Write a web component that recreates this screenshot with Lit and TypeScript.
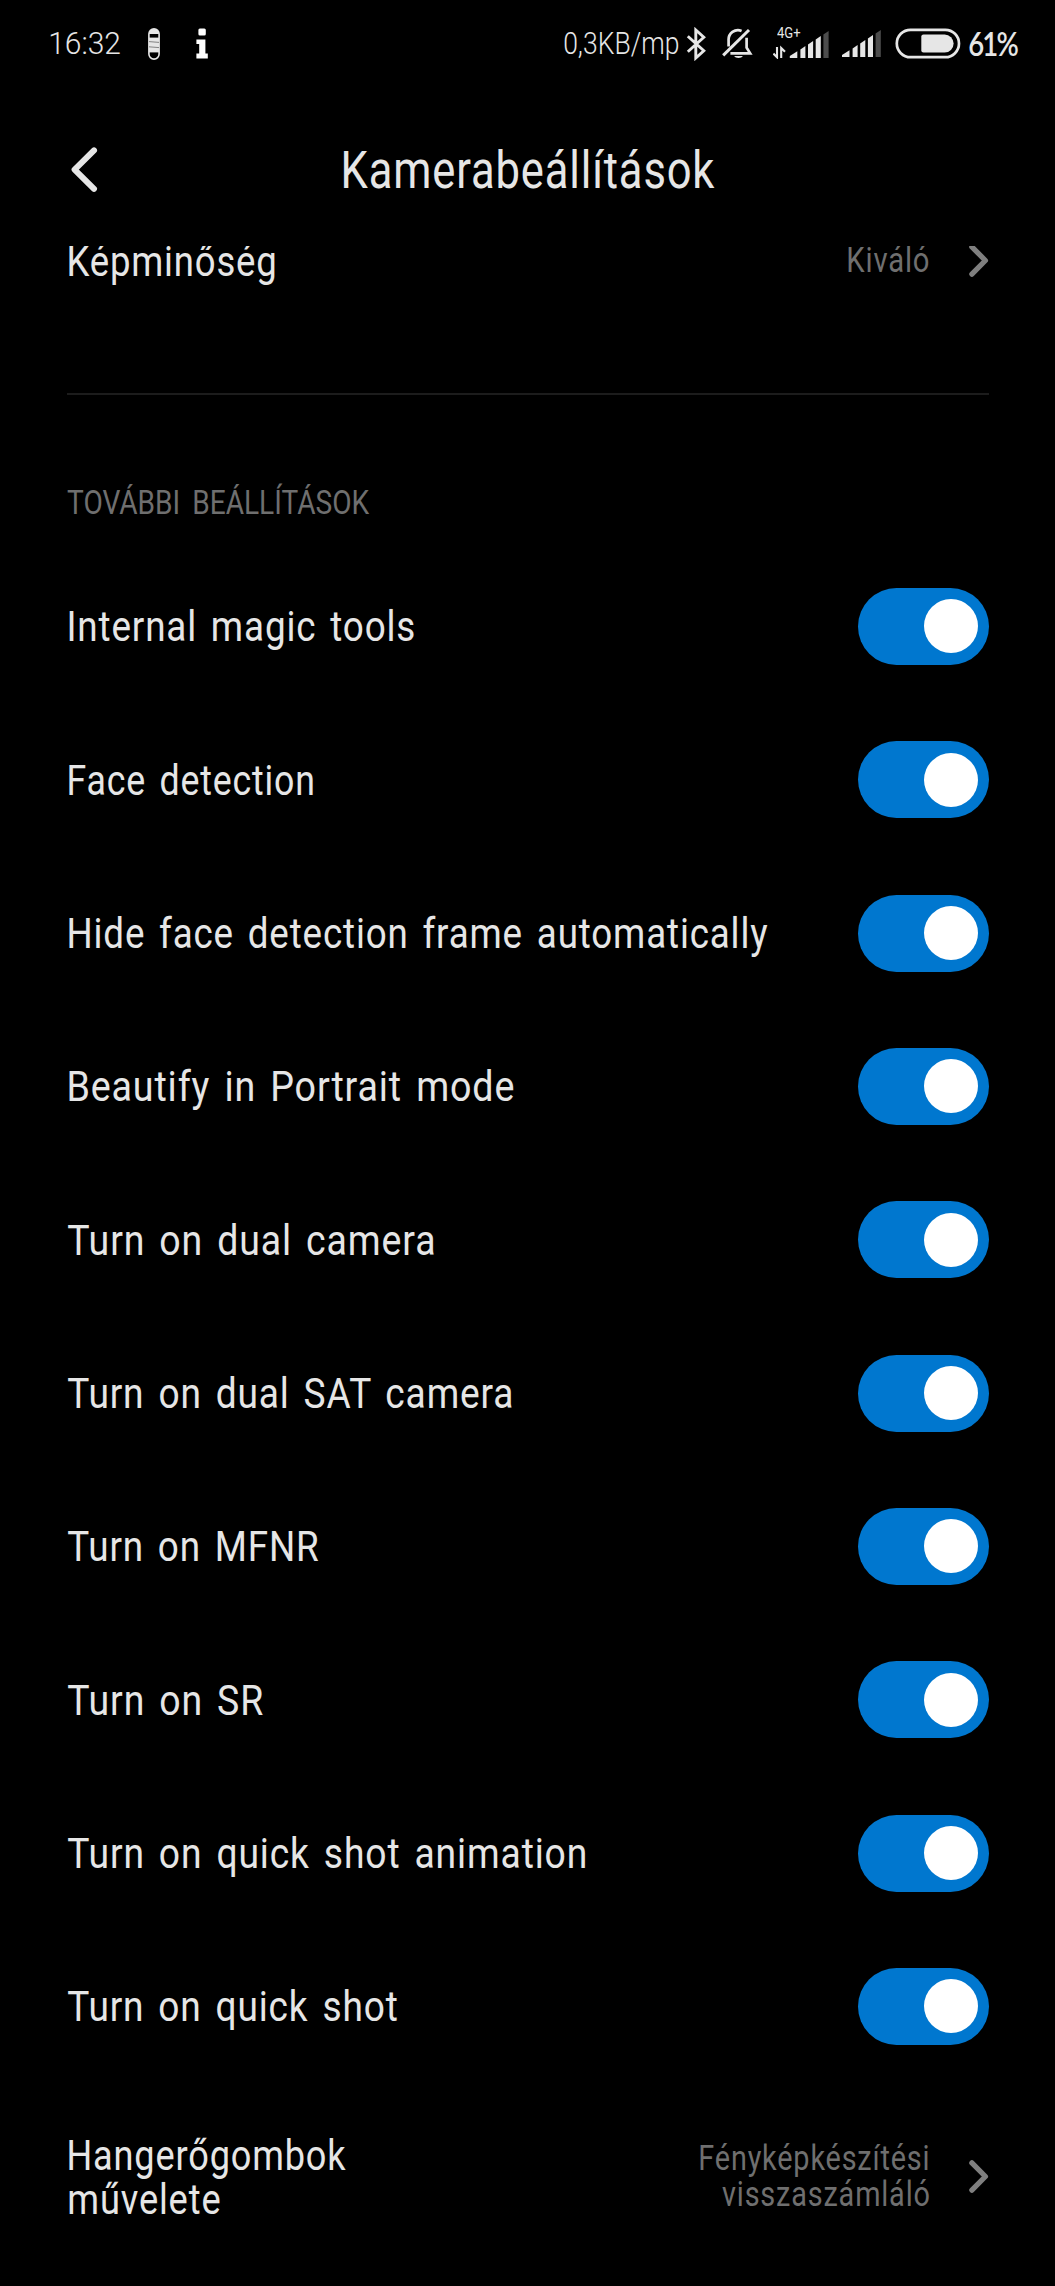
import { LitElement, html, css, svg } from "lit";
import { customElement, property, query } from "lit/decorators.js";

/** A line of text whose drawn glyphs are condensed to a set width. */
@customElement("fit-text")
class FitText extends LitElement {
  static styles = css`
    :host {
      display: block;
      white-space: nowrap;
    }
    .line {
      display: inline-block;
      transform-origin: 0 50%;
      white-space: pre;
    }
  `;

  @property() text = "";
  @property({ type: Number }) width = 0;
  @query(".line") line!: HTMLElement;

  render() {
    return html`<span class="line">${this.text}</span>`;
  }

  updated() {
    const cs = getComputedStyle(this);
    const ctx = document.createElement("canvas").getContext("2d")!;
    ctx.font = `${cs.fontWeight} ${cs.fontSize} ${cs.fontFamily}`;
    const first = ctx.measureText(this.text[0]);
    const last = ctx.measureText(this.text[this.text.length - 1]);
    const left = -first.actualBoundingBoxLeft;
    const right = last.width - last.actualBoundingBoxRight;
    const spacing = parseFloat(cs.letterSpacing) || 0;
    const ink = this.line.offsetWidth - spacing - left - right;
    const k = this.width / ink;
    this.style.width = `${this.width}px`;
    this.line.style.transform = `translateX(${-left * k}px) scaleX(${k})`;
  }
}

@customElement("toggle-switch")
class ToggleSwitch extends LitElement {
  static styles = css`
    :host {
      display: block;
    }
    .track {
      display: flex;
      align-items: center;
      justify-content: flex-end;
      box-sizing: border-box;
      width: 130.5px;
      height: 77px;
      padding-right: 10.5px;
      border-radius: 39px;
      background: #0077cf;
    }
    .knob {
      width: 54px;
      height: 54px;
      border-radius: 50%;
      background: #fff;
    }
  `;

  render() {
    return html`<div class="track" role="switch" aria-checked="true"><div class="knob"></div></div>`;
  }
}

const toggles: [string, number][] = [
  ["Internal magic tools", 345],
  ["Face detection", 243.5],
  ["Hide face detection frame automatically", 698],
  ["Beautify in Portrait mode", 444.5],
  ["Turn on dual camera", 366.5],
  ["Turn on dual SAT camera", 444.5],
  ["Turn on MFNR", 250.5],
  ["Turn on SR", 194.5],
  ["Turn on quick shot animation", 516.5],
  ["Turn on quick shot", 329],
];

const chevron = html`<svg class="chevron" width="20" height="33" viewBox="0 0 20 33">
  <path d="M2.9 2.9 L16.4 16.5 L2.9 30.1" fill="none" stroke="#7f7f7f" stroke-width="5.3" stroke-linecap="round" stroke-linejoin="round" />
</svg>`;

const bars = svg`
  <path d="M0 28 V26 L7.5 21.2 V28 Z" />
  <path d="M10.6 28 V19.4 L15.6 16 V28 Z" />
  <path d="M18.2 28 V14.4 L23.3 11 V28 Z" />
  <path d="M25.9 28 V9.4 L31 6 V28 Z" />
  <path d="M33.6 28 V4.4 L38.8 1 V28 Z" fill="#4c4c4c" />
`;

@customElement("app-root")
class AppRoot extends LitElement {
  static styles = css`
    :host {
      display: block;
      background: #000;
      color: #e6e6e6;
      font-family: Roboto, "Liberation Sans", sans-serif;
    }
    .screen {
      display: flex;
      flex-direction: column;
      height: 2286px;
      overflow: hidden;
      background: #000;
    }
    svg {
      display: block;
      flex: none;
    }
    .status {
      display: flex;
      align-items: center;
      flex: none;
      height: 87px;
      padding: 0 37px 0 50px;
      font-size: 32px;
      font-weight: 350;
      line-height: 38px;
    }
    .clock,
    .speed {
      margin-top: -1px;
    }
    .pill {
      margin-left: 27px;
    }
    .info {
      margin-left: 36px;
    }
    .right {
      display: flex;
      align-items: center;
      margin-left: auto;
    }
    .bt {
      margin-left: 8px;
    }
    .bell {
      margin-left: 15px;
    }
    .cell {
      display: flex;
      flex-direction: column;
      margin-left: 20px;
      margin-top: -1px;
    }
    .net {
      height: 14px;
      margin-left: 4px;
      margin-bottom: -12px;
      font-size: 15px;
      font-weight: 400;
      line-height: 11px;
    }
    .sig {
      margin-left: 13px;
    }
    .batt {
      margin-left: 14px;
    }
    .pct {
      margin-left: 8px;
      font-family: Lato, Roboto, sans-serif;
      font-weight: 600;
      letter-spacing: -2px;
    }
    .header {
      display: grid;
      grid-template-columns: 1fr auto 1fr;
      align-items: center;
      flex: none;
      box-sizing: border-box;
      height: 159px;
      padding: 7px 67px 0 70px;
    }
    .title {
      font-size: 51px;
      line-height: 60px;
      letter-spacing: 1px;
      margin-top: 1px;
    }
    .list {
      flex: 1;
      overflow: hidden;
    }
    .row {
      display: flex;
      align-items: center;
      justify-content: space-between;
      box-sizing: border-box;
      height: 153.33px;
      padding: 0 66.5px 0 68.5px;
    }
    .clipped {
      margin-top: -62px;
    }
    .last {
      height: 187.4px;
    }
    .label {
      font-size: 43px;
      line-height: 44px;
      letter-spacing: 1px;
      word-spacing: 4.5px;
    }
    .outdent {
      margin-left: -1px;
    }
    .value {
      display: flex;
      align-items: center;
      gap: 40px;
      color: #6f6f6f;
      font-size: 35px;
      line-height: 36.3px;
      letter-spacing: 1px;
    }
    .lines {
      display: flex;
      flex-direction: column;
      align-items: flex-end;
    }
    .divider {
      height: 1.5px;
      margin: 56px 66px 0 67px;
      background: #1c1c1c;
    }
    .section {
      display: flex;
      align-items: center;
      box-sizing: border-box;
      height: 155px;
      padding: 59px 67px 0;
      color: #6f6f6f;
      font-size: 34px;
      word-spacing: 6px;
    }
  `;

  render() {
    return html`
      <div class="screen">
        <div class="status">
          <fit-text class="clock" text="16:32" .width=${70.5}></fit-text>
          <svg class="pill" width="12" height="32" viewBox="0 0 12 32">
            <rect x="0.9" y="0.9" width="10.2" height="30.2" rx="5.1" fill="#000" stroke="#e6e6e6" stroke-width="1.6" />
            <path d="M1 6 A5 5 0 0 1 11 6 Z" fill="#e6e6e6" />
            <rect x="1" y="9.6" width="10" height="14.8" fill="#e6e6e6" />
            <path d="M1 13.6 L11 14.4 M1 18.8 L11 19.6" stroke="#777" stroke-width="0.9" />
          </svg>
          <svg class="info" width="12" height="31" viewBox="0 0 12 31" fill="#fff">
            <rect x="2.4" y="0.6" width="7.4" height="7" rx="1.5" />
            <path d="M0.4 11.4 H9.4 V25.6 H11.8 V30.4 H0.4 V25.6 H3.2 V16 H0.4 Z" />
          </svg>
          <div class="right">
            <fit-text class="speed" text="0,3KB/mp" .width=${114.5}></fit-text>
            <svg class="bt" width="21" height="34" viewBox="0 0 21 34">
              <path d="M1.8 9.2 L17.8 23.8 L9.8 31 V3 L17.8 10.2 L1.8 24.8" fill="none" stroke="#e6e6e6" stroke-width="2.9" stroke-linejoin="miter" />
            </svg>
            <svg class="bell" width="31" height="32" viewBox="0 0 31 32" fill="none" stroke="#e6e6e6" stroke-width="2.7">
              <path d="M6.6 18.5 V12.4 A9.4 9.6 0 0 1 19.6 2.9" />
              <path d="M24.6 9.8 V19.6 L28.2 25.4 H8.4" />
              <path d="M1.2 27.4 L27 2" stroke-width="3" />
              <path d="M12 28 H21 A5 3.6 0 0 1 12 28 Z" fill="#e6e6e6" stroke="none" />
            </svg>
            <div class="cell">
              <fit-text class="net" text="4G+" .width=${23}></fit-text>
              <svg width="56" height="29" viewBox="0 0 56 29" fill="#e6e6e6">
                <path d="M4 17 V27.2 L0.4 23.6 M8.2 28 V18 L12 21.8" fill="none" stroke="#e6e6e6" stroke-width="2.1" />
                <g transform="translate(16.8 0)">${bars}</g>
              </svg>
            </div>
            <svg class="sig" width="39" height="29" viewBox="0 0 39 29" fill="#e6e6e6">${bars}</svg>
            <svg class="batt" width="66" height="31" viewBox="0 0 66 31">
              <rect x="1.8" y="1.8" width="62.2" height="27.4" rx="13.7" fill="none" stroke="#e6e6e6" stroke-width="2.7" />
              <path d="M28.5 6.6 H49.6 A9 9 0 0 1 49.6 24.6 H28.5 Q26.3 24.6 26.3 22.6 V8.6 Q26.3 6.6 28.5 6.6 Z" fill="#e6e6e6" />
            </svg>
            <fit-text class="pct" text="61%" .width=${49}></fit-text>
          </div>
        </div>
        <div class="header">
          <svg width="29" height="46" viewBox="0 0 29 46">
            <path d="M24 3.4 L4.6 22.6 L24 41.8" fill="none" stroke="#e6e6e6" stroke-width="6" stroke-linecap="round" stroke-linejoin="round" />
          </svg>
          <fit-text class="title" text="Kamerabeállítások" .width=${370.5}></fit-text>
        </div>
        <div class="list">
          <div class="row clipped">
            <fit-text class="label" text="Képminőség" .width=${206}></fit-text>
            <div class="value">
              <fit-text text="Kiváló" .width=${81}></fit-text>
              ${chevron}
            </div>
          </div>
          <div class="divider"></div>
          <div class="section"><fit-text text="TOVÁBBI BEÁLLÍTÁSOK" .width=${303}></fit-text></div>
          ${toggles.map(
            ([name, width]) => html`<div class="row">
              <fit-text class=${name.startsWith("T") ? "label outdent" : "label"} text=${name} .width=${width}></fit-text>
              <toggle-switch></toggle-switch>
            </div>`
          )}
          <div class="row last">
            <div>
              <fit-text class="label" text="Hangerőgombok" .width=${276.5}></fit-text>
              <fit-text class="label" text="művelete" .width=${151}></fit-text>
            </div>
            <div class="value">
              <div class="lines">
                <fit-text text="Fényképkészítési" .width=${228.5}></fit-text>
                <fit-text text="visszaszámláló" .width=${207}></fit-text>
              </div>
              ${chevron}
            </div>
          </div>
        </div>
      </div>
    `;
  }
}
